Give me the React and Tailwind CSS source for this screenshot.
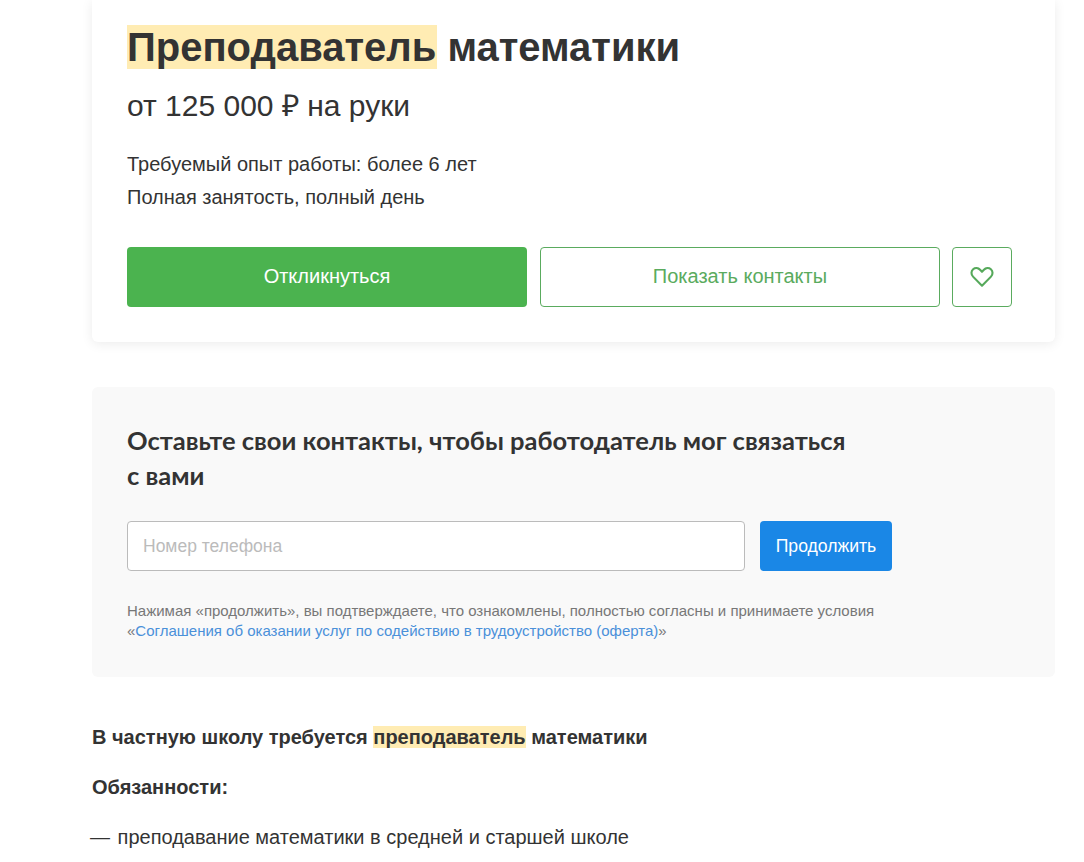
import React from 'react';

const App = () => {
    return (
        <div className="h-screen overflow-hidden bg-white pl-[92px] pr-[29px] font-['Liberation_Sans',Arial,sans-serif] text-[#333]">
            {/* Vacancy card */}
            <div className="rounded-b-md bg-white px-[35px] pt-[25px] pb-[35px] shadow-[0_2px_12px_rgba(0,0,0,0.08)]">
                <h1 className="text-[40px] leading-[44px] font-bold">
                    <span className="-mr-px inline-block bg-[#ffecb3] pr-px">Преподаватель</span> математики
                </h1>
                <div className="mt-[21px] text-[30px] leading-[32px]">от 125 000 ₽ на руки</div>
                <div className="mt-[26px] text-[20px] leading-[33px]">
                    <div>Требуемый опыт работы: более 6 лет</div>
                    <div>Полная занятость, полный день</div>
                </div>
                <div className="mt-[33px] flex gap-[13px]">
                    <button className="h-[60px] w-[400px] rounded bg-[#4bb34f] pb-[2px] text-[20px] text-white">
                        Откликнуться
                    </button>
                    <button className="h-[60px] w-[400px] rounded border border-[#5aab5e] pb-[2px] text-[20px] text-[#5aab5e]">
                        Показать контакты
                    </button>
                    <button className="-ml-px flex h-[60px] w-[60px] items-center justify-center rounded border border-[#5aab5e]">
                        <svg width="24" height="22" viewBox="0 0 26 24" fill="none" stroke="#56a95b" strokeWidth="2.3" strokeLinejoin="round">
                            <path d="M13 21.5 3.2 11.6C.9 9.2 1 5.6 3.3 3.6c2.3-2 5.6-1.6 7.6.5L13 6.3l2.1-2.2c2-2.1 5.3-2.5 7.6-.5 2.3 2 2.4 5.6.1 8L13 21.5Z" />
                        </svg>
                    </button>
                </div>
            </div>

            {/* Contacts form */}
            <div className="mt-[45px] rounded-md bg-[#f9f9f9] px-[35px] pt-[36px] pb-[36px]">
                <h2 className="w-[760px] font-['Lato',sans-serif] text-[25.5px] leading-[35px] font-bold">
                    Оставьте свои контакты, чтобы работодатель мог связаться
                    <br />
                    с вами
                </h2>
                <div className="mt-[28px] flex gap-[15px]">
                    <input
                        type="text"
                        placeholder="Номер телефона"
                        className="h-[50px] w-[618px] rounded border border-[#bbb] bg-white px-[15px] text-[17.5px] placeholder:text-[#bbb]"
                    />
                    <button className="h-[50px] w-[132px] rounded bg-[#1a87e6] text-[17.6px] text-white">
                        Продолжить
                    </button>
                </div>
                <p className="mt-[30px] text-[15px] leading-[20px] text-[#777]">
                    Нажимая «продолжить», вы подтверждаете, что ознакомлены, полностью согласны и принимаете условия
                    <br />
                    «<a href="#" className="text-[#4a90d9]">Соглашения об оказании услуг по содействию в трудоустройство (оферта)</a>»
                </p>
            </div>

            {/* Description */}
            <div className="mt-[45px] text-[20px] leading-[30px]">
                <p className="font-bold">
                    В частную школу требуется <span className="bg-[#ffecb3]">преподаватель</span> математики
                </p>
                <p className="mt-[20px] font-bold">Обязанности:</p>
                <p className="mt-[20px] -ml-[2px]">
                    <span className="mr-[2px]">—</span> преподавание математики в средней и старшей школе
                </p>
            </div>
        </div>
    );
};

export default App;
